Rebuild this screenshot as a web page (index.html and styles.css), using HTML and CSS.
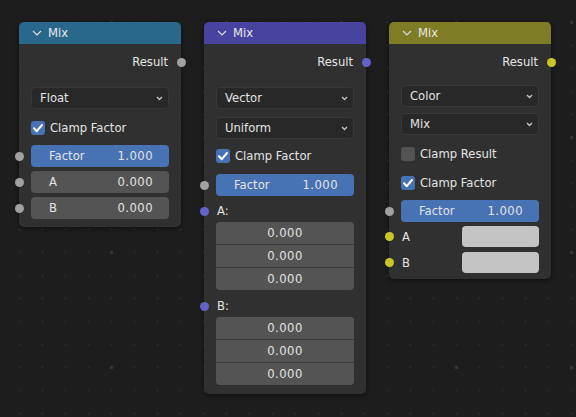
FILE: index.html
```html
<!DOCTYPE html>
<html lang="en">
<head>
<meta charset="utf-8">
<title>Mix nodes</title>
<link rel="stylesheet" href="styles.css">
</head>
<body>
<div class="canvas">

  <!-- Float mix -->
  <div class="node node-1">
    <div class="hdr hdr-float">
      <svg class="chev" width="10" height="6" viewBox="0 0 10 6"><path d="M1 1 L5 5 L9 1"/></svg>
      <span>Mix</span>
    </div>
    <div class="out"><span>Result</span><i class="sock sock-out s-float"></i></div>
    <div class="drop mt14"><span>Float</span><svg class="dchev" width="7" height="5" viewBox="0 0 7 5"><path d="M1 1 L3.5 3.5 L6 1"/></svg></div>
    <div class="check mt8"><span class="box on"><svg width="14" height="14" viewBox="0 0 14 14"><path d="M3 7.3 L5.8 10.2 L11 4"/></svg></span><span>Clamp Factor</span></div>
    <div class="slider mt6"><i class="sock sock-in s-float"></i><span>Factor</span><span class="val">1.000</span></div>
    <div class="num mt4"><i class="sock sock-in s-float"></i><span>A</span><span class="val">0.000</span></div>
    <div class="num mt4"><i class="sock sock-in s-float"></i><span>B</span><span class="val">0.000</span></div>
  </div>

  <!-- Vector mix -->
  <div class="node node-2">
    <div class="hdr hdr-vector">
      <svg class="chev" width="10" height="6" viewBox="0 0 10 6"><path d="M1 1 L5 5 L9 1"/></svg>
      <span>Mix</span>
    </div>
    <div class="out"><span>Result</span><i class="sock sock-out s-vector"></i></div>
    <div class="drop mt14"><span>Vector</span><svg class="dchev" width="7" height="5" viewBox="0 0 7 5"><path d="M1 1 L3.5 3.5 L6 1"/></svg></div>
    <div class="drop mt8"><span>Uniform</span><svg class="dchev" width="7" height="5" viewBox="0 0 7 5"><path d="M1 1 L3.5 3.5 L6 1"/></svg></div>
    <div class="check mt6"><span class="box on"><svg width="14" height="14" viewBox="0 0 14 14"><path d="M3 7.3 L5.8 10.2 L11 4"/></svg></span><span>Clamp Factor</span></div>
    <div class="slider mt7"><i class="sock sock-in s-float"></i><span>Factor</span><span class="val">1.000</span></div>
    <div class="label mt4"><i class="sock sock-in s-vector"></i><span>A:</span></div>
    <div class="vec">
      <div class="vf val">0.000</div>
      <div class="vf val">0.000</div>
      <div class="vf val">0.000</div>
    </div>
    <div class="label mt5"><i class="sock sock-in s-vector"></i><span>B:</span></div>
    <div class="vec">
      <div class="vf val">0.000</div>
      <div class="vf val">0.000</div>
      <div class="vf val">0.000</div>
    </div>
  </div>

  <!-- Color mix -->
  <div class="node node-3">
    <div class="hdr hdr-color">
      <svg class="chev" width="10" height="6" viewBox="0 0 10 6"><path d="M1 1 L5 5 L9 1"/></svg>
      <span>Mix</span>
    </div>
    <div class="out"><span>Result</span><i class="sock sock-out s-color"></i></div>
    <div class="drop mt12"><span>Color</span><svg class="dchev" width="7" height="5" viewBox="0 0 7 5"><path d="M1 1 L3.5 3.5 L6 1"/></svg></div>
    <div class="drop mt6"><span>Mix</span><svg class="dchev" width="7" height="5" viewBox="0 0 7 5"><path d="M1 1 L3.5 3.5 L6 1"/></svg></div>
    <div class="check mt8"><span class="box"></span><span>Clamp Result</span></div>
    <div class="check mt7"><span class="box on"><svg width="14" height="14" viewBox="0 0 14 14"><path d="M3 7.3 L5.8 10.2 L11 4"/></svg></span><span>Clamp Factor</span></div>
    <div class="slider mt6"><i class="sock sock-in s-float"></i><span>Factor</span><span class="val">1.000</span></div>
    <div class="crow mt4"><i class="sock sock-in s-color"></i><span>A</span><span class="swatch"></span></div>
    <div class="crow mt5"><i class="sock sock-in s-color"></i><span>B</span><span class="swatch"></span></div>
  </div>

</div>
</body>
</html>
```

FILE: styles.css
```css
* { box-sizing: border-box; }

html, body {
  margin: 0;
  padding: 0;
  background: #1d1d1d;
}

body {
  font-family: "DejaVu Sans", "Liberation Sans", sans-serif;
  font-size: 11.6px;
  color: #e4e4e4;
}

.canvas {
  position: relative;
  width: 576px;
  height: 417px;
  overflow: hidden;
  background-color: #1d1d1d;
  background-image:
    radial-gradient(circle, #353535 0, #353535 1.4px, rgba(29,29,29,0) 2.2px),
    radial-gradient(circle, #282828 0, #282828 0.9px, rgba(29,29,29,0) 1.6px);
  background-size: 115px 115px, 23px 23px;
  background-position: 54px 80px, 8px 11px;
}

/* node frame */
.node {
  position: absolute;
  top: 22px;
  width: 162px;
  background: #303030;
  border-radius: 5px;
  box-shadow: 0 1px 5px rgba(0, 0, 0, 0.55);
  padding: 0 12px 8px 12px;
  display: flex;
  flex-direction: column;
}
.node-1 { left: 19px; }
.node-2 { left: 204px; padding-bottom: 9px; }
.node-3 { left: 389px; padding-bottom: 6px; }

.hdr {
  height: 22px;
  margin: 0 -12px;
  padding-left: 13px;
  border-radius: 5px 5px 0 0;
  display: flex;
  align-items: center;
  gap: 6px;
  color: #e8e8e8;
}
.hdr-float { background: #2a688b; }
.hdr-vector { background: #4943a0; }
.hdr-color { background: #7e7c24; }

.chev path {
  fill: none;
  stroke: #dcdcdc;
  stroke-width: 1.2;
}

/* output row */
.out {
  position: relative;
  height: 22px;
  margin-top: 7px;
  display: flex;
  align-items: center;
  justify-content: flex-end;
  padding-right: 1px;
}

/* sockets */
.sock {
  position: absolute;
  top: 50%;
  width: 9px;
  height: 9px;
  margin-top: -4.5px;
  border-radius: 50%;
}
.sock-out { right: -17px; }
.sock-in { left: -16.5px; }
.s-float { background: #a1a1a1; }
.s-vector { background: #6363c7; }
.s-color { background: #c7c729; }

/* dropdowns */
.drop {
  height: 22px;
  background: #282828;
  border: 1px solid #383838;
  border-radius: 4px;
  display: flex;
  align-items: center;
  justify-content: space-between;
  padding: 0 5px 0 8px;
}
.dchev path {
  fill: none;
  stroke: #c8c8c8;
  stroke-width: 1.3;
}

/* checkboxes */
.check {
  height: 22px;
  display: flex;
  align-items: center;
  gap: 5px;
}
.box {
  width: 14px;
  height: 14px;
  border-radius: 3px;
  background: #545454;
  display: flex;
}
.box.on { background: #4772b3; }
.box path {
  fill: none;
  stroke: #ffffff;
  stroke-width: 2;
  stroke-linecap: round;
  stroke-linejoin: round;
}

/* sliders / number fields */
.slider, .num {
  position: relative;
  height: 22px;
  border-radius: 4px;
  display: flex;
  align-items: center;
  justify-content: space-between;
  padding: 0 16px 0 18px;
}
.slider { background: #4772b3; }
.num { background: #545454; }

.val { letter-spacing: 0.45px; }

/* vector label + fields */
.label {
  position: relative;
  height: 22px;
  display: flex;
  align-items: center;
  padding-left: 1px;
}
.vec {
  display: flex;
  flex-direction: column;
  gap: 1px;
  background: #3c3c3c;
  border-radius: 4px;
  overflow: hidden;
}
.vf {
  height: 22px;
  background: #545454;
  display: flex;
  align-items: center;
  justify-content: center;
}

/* color inputs */
.crow {
  position: relative;
  height: 21px;
  display: flex;
  align-items: center;
  justify-content: space-between;
  padding-left: 1px;
}
.swatch {
  width: 77px;
  height: 21px;
  border-radius: 4px;
  background: #c4c4c4;
}

.mt4 { margin-top: 4px; }
.mt5 { margin-top: 5px; }
.mt6 { margin-top: 6px; }
.mt7 { margin-top: 7px; }
.mt8 { margin-top: 8px; }
.mt12 { margin-top: 12px; }
.mt14 { margin-top: 14px; }
```
